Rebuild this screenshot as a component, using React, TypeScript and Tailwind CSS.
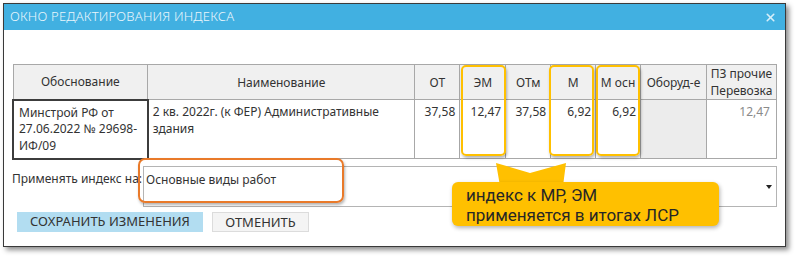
import { X } from 'lucide-react'

const cols = [
  { title: 'Обоснование', w: 135 },
  { title: 'Наименование', w: 268 },
  { title: 'ОТ', w: 45 },
  { title: 'ЭМ', w: 46 },
  { title: 'ОТм', w: 45 },
  { title: 'М', w: 45 },
  { title: 'М осн', w: 45 },
  { title: 'Оборуд-е', w: 66 },
  { title: 'ПЗ прочие Перевозка', w: 70 },
]

export default function App() {
  return (
    <div className="relative h-[258px] w-[796px] overflow-hidden bg-white font-['Noto_Sans',sans-serif] text-[12px] text-[#333]">
      <div className="ml-[3px] mt-[3px] flex h-[244px] w-[783px] flex-col border border-[#3a3a3a] bg-white shadow-[3px_3px_5px_rgba(0,0,0,0.45)]">
        <div className="flex h-[26px] shrink-0 items-center justify-between bg-[#41b0e1] pl-[6px] pr-[8px]">
          <span className="text-[13px] font-light tracking-[0.2px] text-[#eaf6fc]">ОКНО РЕДАКТИРОВАНИЯ ИНДЕКСА</span>
          <X size={13} strokeWidth={3} className="text-[#d7eef9]" />
        </div>

        <div className="px-[8px] pt-[34px]">
          <table className="table-fixed border-collapse">
            <thead>
              <tr className="h-[34px] bg-[#f0f0f0]">
                {cols.map((c) => (
                  <th
                    key={c.title}
                    style={{ width: c.w }}
                    className="border border-[#a8a8a8] px-[2px] text-center align-middle font-normal leading-[17px]"
                  >
                    {c.title}
                  </th>
                ))}
              </tr>
            </thead>
            <tbody>
              <tr className="h-[59px] align-top leading-[16.5px]">
                <td className="border-2 border-[#3c3c3c] px-[5px] pt-[4px]">
                  Минстрой РФ от 27.06.2022 № 29698-ИФ/09
                </td>
                <td className="border border-[#a8a8a8] px-[4px] pt-[4px]">
                  2 кв. 2022г. (к ФЕР) Административные здания
                </td>
                <td className="border border-[#a8a8a8] px-[4px] pt-[4px] text-right">37,58</td>
                <td className="border border-[#a8a8a8] px-[4px] pt-[4px] text-right">12,47</td>
                <td className="border border-[#a8a8a8] px-[4px] pt-[4px] text-right">37,58</td>
                <td className="border border-[#a8a8a8] px-[4px] pt-[4px] text-right">6,92</td>
                <td className="border border-[#a8a8a8] px-[4px] pt-[4px] text-right">6,92</td>
                <td className="border border-[#a8a8a8] bg-[#ececec]"></td>
                <td className="border border-[#a8a8a8] px-[6px] pt-[4px] text-right text-[#8a8a8a]">12,47</td>
              </tr>
            </tbody>
          </table>

          <div className="mt-[6px] flex items-start">
            <span className="w-[131px] shrink-0 pt-[4px]">Применять индекс на:</span>
            <div className="flex h-[41px] w-[634px] items-start justify-between border border-[#b4b4b4] pl-[2px] pr-[4px] pt-[4px]">
              <span>Основные виды работ</span>
              <span className="mt-[14px] h-0 w-0 border-x-[3px] border-t-[4px] border-x-transparent border-t-[#222]"></span>
            </div>
          </div>

          <div className="mt-[5px] flex gap-[9px] pl-[5px] text-[13px]">
            <button className="h-[20px] w-[186px] bg-[#b2ddf1] text-[#333]">СОХРАНИТЬ ИЗМЕНЕНИЯ</button>
            <button className="h-[20px] w-[97px] border border-[#dcdcdc] bg-[#f4f4f4] text-[#333]">ОТМЕНИТЬ</button>
          </div>
        </div>
      </div>

      {/* annotations over the screenshot */}
      <div className="absolute left-[461px] top-[65px] h-[91px] w-[45px] rounded-[5px] border-2 border-[#ffc000] shadow-[1px_2px_3px_rgba(0,0,0,0.3)]"></div>
      <div className="absolute left-[549px] top-[65px] h-[91px] w-[45px] rounded-[5px] border-2 border-[#ffc000] shadow-[1px_2px_3px_rgba(0,0,0,0.3)]"></div>
      <div className="absolute left-[596px] top-[65px] h-[91px] w-[44px] rounded-[5px] border-2 border-[#ffc000] shadow-[1px_2px_3px_rgba(0,0,0,0.3)]"></div>
      <div className="absolute left-[138px] top-[158px] h-[45px] w-[206px] rounded-[7px] border-[2.5px] border-[#e97a2a] shadow-[1px_2px_3px_rgba(0,0,0,0.3)]"></div>

      <svg className="absolute left-0 top-0" width="796" height="258">
        <polygon points="496,163 530,173 566,163 563,186 500,186" fill="#ffc000" />
      </svg>
      <div className="absolute left-[452px] top-[182px] h-[44px] w-[267px] rounded-[6px] bg-[#ffc000] pl-[14px] pt-[3px] shadow-[1px_2px_4px_rgba(0,0,0,0.3)]">
        <p className="font-[Roboto,sans-serif] text-[17px] leading-[20px] text-neutral-800">
          индекс к МР, ЭМ
          <br />
          применяется в итогах ЛСР
        </p>
      </div>
    </div>
  )
}
